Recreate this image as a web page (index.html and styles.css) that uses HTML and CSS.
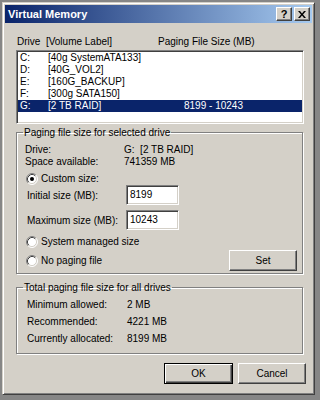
FILE: index.html
```html
<!DOCTYPE html>
<html>
<head>
<meta charset="utf-8">
<link rel="stylesheet" href="styles.css">
</head>
<body>
<div class="window">
  <div class="titlebar">
    <span class="title">Virtual Memory</span>
    <div class="tb-btns">
      <div class="tb tb-help">?</div>
      <div class="tb">
        <svg width="8" height="7" viewBox="0 0 8 7"><path d="M0 0h2l2 2.5L6 0h2L5 3.5 8 7H6L4 4.5 2 7H0l3-3.5z" fill="#000"/></svg>
      </div>
    </div>
  </div>
  <div class="content">
    <div class="colhead"><span class="ch1">Drive&nbsp; [Volume Label]</span><span class="ch2">Paging File Size (MB)</span></div>
    <div class="listbox">
      <div class="row"><span class="c1">C:</span><span class="c2">[40g SystemATA133]</span><span class="c3"></span></div>
      <div class="row"><span class="c1">D:</span><span class="c2">[40G_VOL2]</span><span class="c3"></span></div>
      <div class="row"><span class="c1">E:</span><span class="c2">[160G_BACKUP]</span><span class="c3"></span></div>
      <div class="row"><span class="c1">F:</span><span class="c2">[300g SATA150]</span><span class="c3"></span></div>
      <div class="row sel"><span class="c1">G:</span><span class="c2">[2 TB RAID]</span><span class="c3">8199 - 10243</span></div>
    </div>

    <fieldset class="group g1">
      <legend>Paging file size for selected drive</legend>
      <div class="gbody">
        <div class="kv"><span class="k">Drive:</span><span class="v">G:&nbsp; [2 TB RAID]</span></div>
        <div class="kv"><span class="k">Space available:</span><span class="v">741359 MB</span></div>
        <div class="radio r-custom">
          <svg class="rb" width="12" height="12" viewBox="0 0 12 12"><circle cx="6" cy="6" r="5" fill="#fff"/><path d="M9.89 2.11A5.5 5.5 0 0 0 2.11 9.89" stroke="#808080" fill="none"/><path d="M2.11 9.89A5.5 5.5 0 0 0 9.89 2.11" stroke="#fff" fill="none"/><path d="M9.18 2.82A4.5 4.5 0 0 0 2.82 9.18" stroke="#404040" fill="none"/><path d="M2.82 9.18A4.5 4.5 0 0 0 9.18 2.82" stroke="#d4d0c8" fill="none"/><circle cx="6" cy="6" r="2" fill="#000"/></svg>
          <span>Custom size:</span>
        </div>
        <div class="field"><span class="fl">Initial size (MB):</span><div class="input">8199</div></div>
        <div class="field f2"><span class="fl">Maximum size (MB):</span><div class="input">10243</div></div>
        <div class="radio r-sys">
          <svg class="rb" width="12" height="12" viewBox="0 0 12 12"><circle cx="6" cy="6" r="5" fill="#fff"/><path d="M9.89 2.11A5.5 5.5 0 0 0 2.11 9.89" stroke="#808080" fill="none"/><path d="M2.11 9.89A5.5 5.5 0 0 0 9.89 2.11" stroke="#fff" fill="none"/><path d="M9.18 2.82A4.5 4.5 0 0 0 2.82 9.18" stroke="#404040" fill="none"/><path d="M2.82 9.18A4.5 4.5 0 0 0 9.18 2.82" stroke="#d4d0c8" fill="none"/></svg>
          <span>System managed size</span>
        </div>
        <div class="lastrow">
          <div class="radio">
            <svg class="rb" width="12" height="12" viewBox="0 0 12 12"><circle cx="6" cy="6" r="5" fill="#fff"/><path d="M9.89 2.11A5.5 5.5 0 0 0 2.11 9.89" stroke="#808080" fill="none"/><path d="M2.11 9.89A5.5 5.5 0 0 0 9.89 2.11" stroke="#fff" fill="none"/><path d="M9.18 2.82A4.5 4.5 0 0 0 2.82 9.18" stroke="#404040" fill="none"/><path d="M2.82 9.18A4.5 4.5 0 0 0 9.18 2.82" stroke="#d4d0c8" fill="none"/></svg>
            <span>No paging file</span>
          </div>
          <div class="btn btn-set">Set</div>
        </div>
      </div>
    </fieldset>

    <fieldset class="group g2">
      <legend>Total paging file size for all drives</legend>
      <div class="gbody2">
        <div class="kv2"><span class="k2">Minimum allowed:</span><span>2 MB</span></div>
        <div class="kv2"><span class="k2">Recommended:</span><span>4221 MB</span></div>
        <div class="kv2"><span class="k2">Currently allocated:</span><span>8199 MB</span></div>
      </div>
    </fieldset>

    <div class="buttons">
      <div class="btn btn-default">OK</div>
      <div class="btn btn-cancel">Cancel</div>
    </div>
  </div>
</div>
</body>
</html>
```

FILE: styles.css
```css
* { box-sizing: border-box; }
html, body { margin: 0; padding: 0; }
body {
  background: #868686;
  width: 320px;
  height: 400px;
  overflow: hidden;
  font-family: "Liberation Sans", Arial, sans-serif;
  font-size: 10px;
  color: #000;
  white-space: nowrap;
}
.window {
  margin: 2px 0 0 2px;
  width: 313px;
  height: 393px;
  background: #d4d0c8;
  border: 1px solid;
  border-color: #d4d0c8 #404040 #404040 #d4d0c8;
  box-shadow: inset 1px 1px #fff, inset -1px -1px #808080;
  padding: 2px;
  display: flex;
  flex-direction: column;
}
.titlebar {
  height: 18px;
  flex: none;
  background: linear-gradient(to right, #0a246a, #a6caf0);
  display: flex;
  align-items: center;
  padding: 0 2px 0 3px;
}
.title { color: #fff; font-weight: bold; flex: 1; font-size: 11px; }
.tb-btns { display: flex; gap: 2px; }
.tb {
  width: 16px;
  height: 14px;
  background: #d4d0c8;
  border: 1px solid;
  border-color: #fff #404040 #404040 #fff;
  box-shadow: inset -1px -1px #808080;
  display: flex;
  align-items: center;
  justify-content: center;
  font-weight: bold;
  font-size: 11px;
  line-height: 12px;
}
.content { padding-left: 11px; display: flex; flex-direction: column; }
.colhead { height: 27px; padding-top: 12px; line-height: 14px; display: flex; }
.ch1 { width: 142px; padding-left: 1px; }
.listbox {
  width: 288px;
  height: 74px;
  background: #fff;
  border: 1px solid;
  border-color: #808080 #fff #fff #808080;
  box-shadow: inset 1px 1px #404040, inset -1px -1px #d4d0c8;
  padding: 1px;
}
.row { height: 12px; line-height: 12px; display: flex; padding-left: 2px; }
.row.sel { background: #0a246a; color: #fff; }
.c1 { width: 28px; }
.c2 { width: 136px; }
.group {
  margin: 2px 0 0 0;
  padding: 0;
  width: 287px;
  min-width: 0;
  border: 1px solid #808080;
  box-shadow: 1px 1px 0 #fff, inset 1px 1px 0 #fff;
}
.group legend {
  padding: 0 1px;
  margin-left: 6px;
  line-height: 13px;
}
.gbody { padding: 5px 0 2px 8px; display: flex; flex-direction: column; }
.kv { height: 12px; line-height: 12px; display: flex; }
.k { width: 99px; }
.radio { display: flex; align-items: center; height: 12px; line-height: 12px; }
.rb { margin-left: 1px; margin-right: 3px; flex: none; }
.r-custom { margin-top: 5px; }
.field { display: flex; align-items: center; height: 20px; }
.f2 { margin-top: 5px; }
.fl { width: 101px; padding-left: 2px; }
.input {
  width: 53px;
  height: 20px;
  background: #fff;
  border: 1px solid;
  border-color: #808080 #fff #fff #808080;
  box-shadow: inset 1px 1px #404040, inset -1px -1px #d4d0c8;
  padding-left: 3px;
  line-height: 18px;
}
.r-sys { margin-top: 6px; }
.lastrow { margin-top: 2px; height: 21px; display: flex; align-items: center; }
.btn {
  height: 21px;
  background: #d4d0c8;
  display: flex;
  align-items: center;
  justify-content: center;
  border: 1px solid;
  border-color: #fff #404040 #404040 #fff;
  box-shadow: inset -1px -1px #808080;
}
.btn-set { width: 68px; margin-left: auto; margin-right: 5px; }
.g2 { margin-top: 7px; }
.gbody2 { padding: 2px 0 6px 10px; }
.kv2 { height: 17px; line-height: 17px; display: flex; }
.k2 { width: 100px; }
.buttons { display: flex; justify-content: flex-end; gap: 5px; margin-top: 9px; margin-right: 6px; }
.btn-default {
  width: 69px;
  border-color: #000;
  box-shadow: inset 1px 1px #fff, inset -1px -1px #404040, inset -2px -2px #808080;
}
.btn-cancel { width: 68px; }
```
